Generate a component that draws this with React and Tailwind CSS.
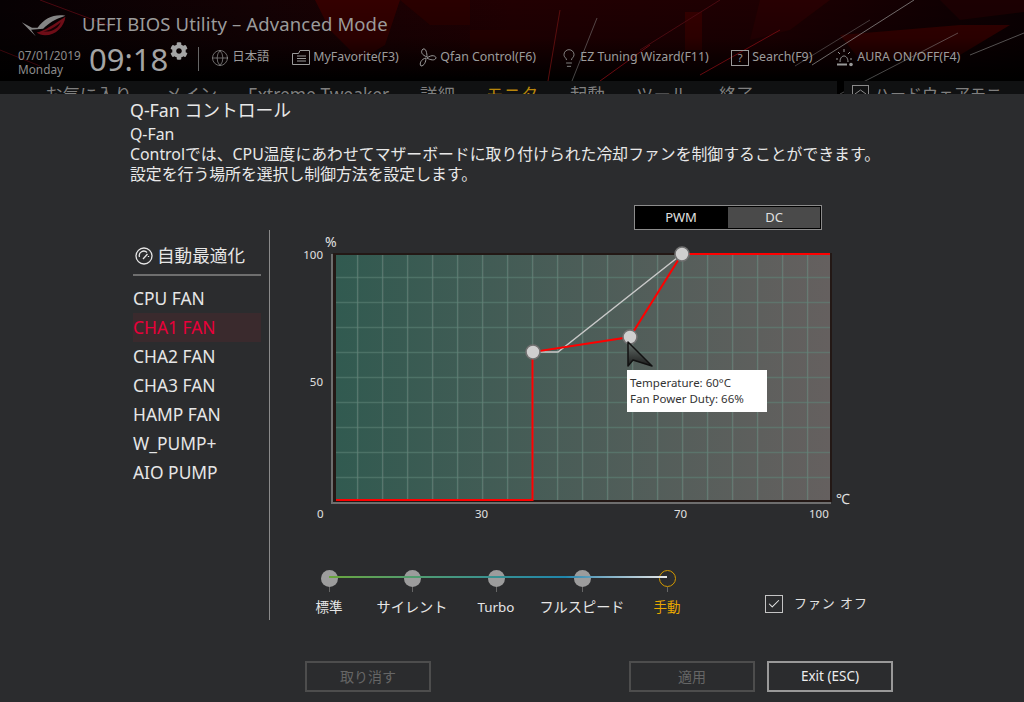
import { Globe, Lightbulb, Check } from "lucide-react";
import { FaCog } from "react-icons/fa";

const FONT = "font-['Noto_Sans','Noto_Sans_CJK_JP',sans-serif]";

const fans = ["CPU FAN", "CHA1 FAN", "CHA2 FAN", "CHA3 FAN", "HAMP FAN", "W_PUMP+", "AIO PUMP"];

const tabs = [
  { label: "お気に入り", className: "w-[120px]" },
  { label: "メイン", className: "w-[83px]" },
  { label: "Extreme Tweaker", className: "w-[172px]" },
  { label: "詳細", className: "w-[66px]" },
  { label: "モニタ", className: "w-[84px] text-[#b8860b]" },
  { label: "起動", className: "w-[66px]" },
  { label: "ツール", className: "w-[83px]" },
  { label: "終了", className: "w-[70px]" },
];

const presets = [
  { label: "標準", width: "w-[84px]", size: "text-[13.5px]" },
  { label: "サイレント", width: "w-[82px]", size: "text-[14.2px]" },
  { label: "Turbo", width: "w-[86px]", size: "text-[13.4px]" },
  { label: "フルスピード", width: "w-[86px]", size: "text-[14.2px]" },
  { label: "手動", width: "w-[84px]", size: "text-[13.5px]", active: true },
];

const HeaderArt = () => (
  <svg className="absolute inset-0" width="1024" height="94" viewBox="0 0 1024 94">
    <defs>
      <linearGradient id="fade" x1="0" y1="0" x2="0" y2="1">
        <stop offset="0" stopColor="#000" stopOpacity="0" />
        <stop offset="0.4" stopColor="#000" stopOpacity="0.2" />
        <stop offset="0.85" stopColor="#000" stopOpacity="1" />
      </linearGradient>
      <linearGradient id="base" x1="0" y1="0" x2="1" y2="0">
        <stop offset="0" stopColor="#070103" />
        <stop offset="0.25" stopColor="#140204" />
        <stop offset="0.5" stopColor="#220002" />
        <stop offset="0.75" stopColor="#1e0002" />
        <stop offset="1" stopColor="#0a0002" />
      </linearGradient>
    </defs>
    <rect width="1024" height="94" fill="url(#base)" />
    <polygon points="315,0 400,0 385,45 360,60 330,30" fill="#340000" />
    <polygon points="400,0 470,0 470,25 430,25" fill="#2a0000" />
    <polygon points="470,30 530,30 530,65 470,65" fill="#280000" />
    <polygon points="685,12 702,12 702,50 685,50" fill="#360000" />
    <polygon points="840,35 960,25 1010,25 960,55 860,60" fill="#340000" />
    <polygon points="760,0 830,0 790,30 750,40" fill="#280002" />
    <polygon points="940,0 1024,0 1024,12 960,20" fill="#1c0002" />
    <rect width="1024" height="94" fill="url(#fade)" />
    <g fill="none" strokeWidth="1">
      <path d="M40 0 L110 26" stroke="#4a0810" />
      <path d="M0 50 L40 66" stroke="#3a060c" />
      <path d="M597 18 L572 81" stroke="#8a8a8a" strokeOpacity="0.5" />
      <path d="M560 10 L548 81" stroke="#5a0e0e" />
      <path d="M640 50 L720 0" stroke="#4a0a10" />
      <path d="M812 65 L914 0" stroke="#b0b0b0" strokeOpacity="0.6" />
      <path d="M795 66 L870 20" stroke="#909090" strokeOpacity="0.4" />
      <path d="M840 94 L958 33" stroke="#a0a0a0" strokeOpacity="0.45" />
      <path d="M970 55 L1024 33" stroke="#a0a0a0" strokeOpacity="0.5" />
      <path d="M600 81 L650 45" stroke="#6a0a10" />
      <path d="M700 75 L780 30" stroke="#6a0a10" />
    </g>
  </svg>
);

const RogLogo = () => (
  <svg width="50" height="26" viewBox="0 0 52 28" className="shrink-0">
    <path d="M1 11 L16 26 L11 19 L24 18 C30 12 36 8 48 4 C36 2 26 6 18 17 L12 17 Z" fill="#858585" />
    <path d="M17 22 C26 20 34 14 48 5 C47 15 38 25 26 25 C22 25 20 24 17 22 Z" fill="#6e0d17" />
    <path d="M24 21 C31 20 37 16 43 11 C41 17 34 22 24 21 Z" fill="#170205" />
  </svg>
);

const FolderIcon = () => (
  <svg width="18" height="15" viewBox="0 0 18 15" fill="none" stroke="#9a9a9a" strokeWidth="1">
    <path d="M0.5 3.5 H6.5 L8 0.5 H17.5 V14.5 H0.5 Z" />
    <path d="M5 6 H14 M5 8.5 H14 M5 11 H14" />
  </svg>
);

const FanIcon = () => (
  <svg width="18" height="19" viewBox="0 0 18 19" fill="none" stroke="#9a9a9a" strokeWidth="1">
    <path d="M8 9 C3 7 1 4 4 1 C7 0 8 5 8 9 Z" />
    <path d="M8 10 C13 6 17 8 17 10 C16 13 11 12 8 10 Z" />
    <path d="M7 10 C7 14 5 18 2 18 C0 16 2 11 7 10 Z" />
  </svg>
);

const AuraIcon = () => (
  <svg width="18" height="18" viewBox="0 0 18 18" fill="none" stroke="#9a9a9a" strokeWidth="1">
    <path d="M4 13 C4 5 12 5 12 13" />
    <path d="M1 15.5 H11" strokeWidth="2" />
    <circle cx="15" cy="15.5" r="1.8" fill="#9a9a9a" stroke="none" />
    <path d="M8 0 V3 M2 3 L4 5 M14 3 L12 5 M0 10 H2 M14 10 H16" />
  </svg>
);

const GaugeIcon = () => (
  <svg width="18" height="18" viewBox="0 0 18 18" fill="none" stroke="#e6e6e6" strokeWidth="1.3">
    <circle cx="9" cy="9" r="8" />
    <path d="M4.5 10 A4.5 4.5 0 0 1 12 5.5" />
    <path d="M8 12 L12.5 7" />
    <path d="M13.5 9 V10" />
  </svg>
);

const TopAction = ({ icon, label, className }) => (
  <div className={`flex items-center gap-[3px] -mt-[4px] ${className}`}>
    {icon}
    <span className="text-[12.4px] leading-none text-[#9c9c9c] whitespace-nowrap">{label}</span>
  </div>
);

// The curve and its grid, in the chart's own pixels
const FanChart = () => {
  const vLines = [];
  for (let x = 26; x < 498; x += 25) vLines.push(x);
  const hLines = [24, 49, 74, 99, 124, 149, 174, 199, 224];
  return (
    <svg width="502" height="252" viewBox="0 0 502 252" className="block overflow-visible">
      <defs>
        <linearGradient id="chartBg" x1="0" y1="0" x2="1" y2="0">
          <stop offset="0" stopColor="#315a50" />
          <stop offset="0.5" stopColor="#4c5d58" />
          <stop offset="1" stopColor="#65605f" />
        </linearGradient>
        <linearGradient id="gridLine" x1="0" y1="0" x2="1" y2="0">
          <stop offset="0" stopColor="#3f7d6b" />
          <stop offset="0.5" stopColor="#6c8a80" />
          <stop offset="1" stopColor="#8a8a88" />
        </linearGradient>
        <linearGradient id="arrow" x1="0" y1="0" x2="0" y2="1">
          <stop offset="0" stopColor="#66716c" />
          <stop offset="1" stopColor="#1c1c1c" />
        </linearGradient>
      </defs>
      <rect x="2" y="0" width="499" height="249" fill="#231815" />
      <rect x="5" y="2" width="494" height="245" fill="url(#chartBg)" />
      {vLines.map((x) => (
        <rect key={x} x={x - 0.25} y="2" width="1.5" height="245" fill="url(#gridLine)" opacity="0.6" />
      ))}
      {hLines.map((y) => (
        <rect key={y} x="5" y={y - 0.25} width="494" height="1.5" fill="#5f8579" opacity="0.55" />
      ))}
      <rect x="0" y="1" width="2" height="250" fill="#6e6e6e" />
      <rect x="0" y="249" width="500" height="2" fill="#6e6e6e" />
      <path d="M202 99 L227 99 L351 1" fill="none" stroke="#c9c9c9" strokeWidth="1.4" />
      <path d="M5 247 H201.5 V99 L299 84 L351 1 H499" fill="none" stroke="#ff0000" strokeWidth="2" />
      {[[202, 99], [299, 84], [351, 1]].map(([cx, cy]) => (
        <circle key={cx} cx={cx} cy={cy} r="7" fill="#cfcfcf" stroke="#707070" strokeWidth="1.6" />
      ))}
      <path d="M297 89 L321 113 L302 107 L297 113 Z" fill="url(#arrow)" stroke="#111" strokeWidth="1.5" strokeLinejoin="round" />
    </svg>
  );
};

export default function App() {
  return (
    <div className={`w-[1024px] h-[702px] overflow-hidden bg-[#2b2c2e] flex flex-col ${FONT}`}>
      {/* Top bar */}
      <header className="relative h-[94px] shrink-0 bg-black overflow-hidden">
        <HeaderArt />
        <div className="relative flex items-center h-[48px] pl-[20px] pt-[2px]">
          <RogLogo />
          <h1 className="ml-[12px] text-[18.5px] leading-none tracking-[0.13px] text-[#9b9b9b] -mt-[2px]">
            UEFI BIOS Utility – Advanced Mode
          </h1>
        </div>
        <div className="relative flex items-center h-[33px] -mt-[5px] mb-[5px] pl-[18px]">
          <div className="w-[71px] mt-[4px] text-[11.8px] leading-[14px] text-[#8c8c8c]">
            <div>07/01/2019</div>
            <div>Monday</div>
          </div>
          <div className="text-[31px] leading-none text-[#a4a4a4]">09:18</div>
          <FaCog size={18} className="ml-[2px] text-[#a4a4a4] -mt-[18px]" />
          <div className="ml-[10px] w-px h-[24px] bg-[#666] -mt-[2px]" />
          <TopAction
            className="ml-[12px] w-[81px]"
            icon={<Globe size={18} strokeWidth={0.9} className="text-[#9a9a9a]" />}
            label="日本語"
          />
          <TopAction className="w-[127px]" icon={<FolderIcon />} label="MyFavorite(F3)" />
          <TopAction className="w-[142px]" icon={<FanIcon />} label="Qfan Control(F6)" />
          <TopAction
            className="w-[170px]"
            icon={<Lightbulb size={20} strokeWidth={1} className="text-[#9a9a9a] -ml-[2px] -mr-[2px]" />}
            label="EZ Tuning Wizard(F11)"
          />
          <TopAction
            className="w-[105px]"
            icon={
              <span className="flex items-center justify-center w-[18px] h-[16px] border border-[#9a9a9a] text-[11px] leading-none text-[#9a9a9a]">
                ?
              </span>
            }
            label="Search(F9)"
          />
          <TopAction icon={<AuraIcon />} label="AURA ON/OFF(F4)" />
        </div>
        {/* Tabs: only the top of the row shows above the panel */}
        <div className="relative flex h-[13px] overflow-hidden">
          <div className="flex shrink-0 w-[837px] pl-[45px] pt-[3px] bg-[#101112] text-[17.4px] leading-5 text-[#7f7f7f] whitespace-nowrap">
            {tabs.map((tab) => (
              <div key={tab.label} className={tab.className}>
                {tab.label}
              </div>
            ))}
          </div>
          <div className="flex flex-1 min-w-0 ml-[7px] pl-[8px] pt-[3px] gap-[5px] bg-[#101112] text-[16px] leading-5 text-[#7f7f7f] whitespace-nowrap">
            <svg width="17" height="17" viewBox="0 0 17 17" fill="none" stroke="#8a8a8a" className="mt-[1px] shrink-0">
              <rect x="0.5" y="0.5" width="16" height="16" />
              <path d="M3 9 L8.5 5 L14 9" />
            </svg>
            <div className="w-[126px] overflow-hidden">ハードウェアモニター</div>
          </div>
        </div>
      </header>

      {/* Panel */}
      <main className="relative flex-1 flex flex-col">
        <div className="pl-[130px] pt-[5px] text-[#e8e8e8]">
          <h2 className="text-[17.8px] leading-[22px]">Q-Fan コントロール</h2>
          <div className="mt-[3px] text-[15.85px] leading-[20px] whitespace-nowrap">
            <p>Q-Fan</p>
            <p>Controlでは、CPU温度にあわせてマザーボードに取り付けられた冷却ファンを制御することができます。</p>
            <p>設定を行う場所を選択し制御方法を設定します。</p>
          </div>
        </div>

        <div className="flex ml-[133px] mt-[46px]">
          {/* Fan list */}
          <div className="w-[128px] pt-[13px]">
            <div className="flex items-center gap-[4px] h-[33px] pl-[2px] border-b-2 border-[#6f6f6f] pb-[6px]">
              <GaugeIcon />
              <span className="text-[17.6px] leading-none text-[#e6e6e6]">自動最適化</span>
            </div>
            <ul className="mt-[8px]">
              {fans.map((fan) => (
                <li
                  key={fan}
                  className={`h-[29px] text-[17.4px] leading-[29px] ${
                    fan === "CHA1 FAN" ? "bg-[#3a2a2d] text-[#e9003a]" : "text-[#e6e6e6]"
                  }`}
                >
                  {fan}
                </li>
              ))}
            </ul>
          </div>

          <div className="ml-[8px] w-px h-[390px] bg-[#8a8a8a]" />

          {/* Chart and presets */}
          <div className="relative flex-1 -mt-[25px]">
            <div className="flex ml-[364px] w-[188px] h-[25px] border border-[#8c8c8c] bg-black p-[1px] text-[13px] text-[#e0e0e0]">
              <div className="flex-1 flex items-center justify-center pr-[2px]">PWM</div>
              <div className="w-[92px] flex items-center justify-center bg-[#4a4a4a]">DC</div>
            </div>

            <div className="relative ml-[61px] mt-[23px] w-[502px]">
              <FanChart />
              <span className="absolute -left-[6px] -top-[21px] text-[14px] leading-5 text-[#e0e0e0]">%</span>
              <span className="absolute -left-[32px] -top-[6px] w-[24px] text-right text-[11.5px] leading-4 text-[#e0e0e0]">100</span>
              <span className="absolute -left-[32px] top-[121px] w-[24px] text-right text-[11.5px] leading-4 text-[#e0e0e0]">50</span>
              <span className="absolute -left-[14px] top-[253px] text-[11.5px] leading-4 text-[#e0e0e0]">0</span>
              <span className="absolute left-[144px] top-[253px] text-[11.5px] leading-4 text-[#e0e0e0]">30</span>
              <span className="absolute left-[343px] top-[253px] text-[11.5px] leading-4 text-[#e0e0e0]">70</span>
              <span className="absolute left-[478px] top-[253px] text-[11.5px] leading-4 text-[#e0e0e0]">100</span>
              <span className="absolute left-[505px] top-[236px] text-[14px] leading-5 text-[#e0e0e0]">℃</span>
              {/* Readout under the pointer */}
              <div className="absolute left-[296px] top-[117px] w-[140px] h-[42px] bg-white pl-[3px] pt-[5px] text-[11.5px] leading-[16px] text-[#333] whitespace-nowrap">
                <div>Temperature: 60°C</div>
                <div>Fan Power Duty: 66%</div>
              </div>
            </div>

            {/* Preset slider */}
            <div className="relative flex ml-[17px] mt-[65px]">
              <div className="absolute left-[42px] top-[6px] w-[338px] h-[2px] bg-gradient-to-r from-[#6aa63a] via-[#1f86ac] via-70% to-[#e8e8e8] z-10" />
              {presets.map((preset) => (
                <div key={preset.label} className={`flex flex-col items-center ${preset.width}`}>
                  <div
                    className={`w-[17px] h-[17px] rounded-full ${
                      preset.active ? "border-[1.5px] border-[#d49a00]" : "bg-[#9c9c9c]"
                    }`}
                  />
                  <div className="w-px h-[5px] bg-[#666]" />
                  <div
                    className={`mt-[5px] leading-5 whitespace-nowrap ${preset.size} ${
                      preset.active ? "text-[#e8a800]" : "text-[#e6e6e6]"
                    }`}
                  >
                    {preset.label}
                  </div>
                </div>
              ))}
              <label className="flex items-center ml-[56px] mt-[25px] h-[18px] gap-[11px]">
                <span className="flex items-center justify-center w-[18px] h-[18px] border border-[#c4c4c4]">
                  <Check size={14} strokeWidth={1.8} className="text-[#e6e6e6]" />
                </span>
                <span className="text-[13px] tracking-[0.9px] text-[#e0e0e0] whitespace-nowrap">ファン オフ</span>
              </label>
            </div>
          </div>
        </div>

        {/* Footer buttons */}
        <div className="flex ml-[305px] mt-[41px] text-[14px]">
          <button className="w-[126px] h-[31px] border-2 border-[#4d4d4d] text-[#666]">取り消す</button>
          <button className="ml-[198px] w-[126px] h-[31px] border-2 border-[#4d4d4d] text-[#666]">適用</button>
          <button className="ml-[12px] w-[126px] h-[31px] border-2 border-[#999] text-[13.5px] text-[#eee]">Exit (ESC)</button>
        </div>
      </main>
    </div>
  );
}
